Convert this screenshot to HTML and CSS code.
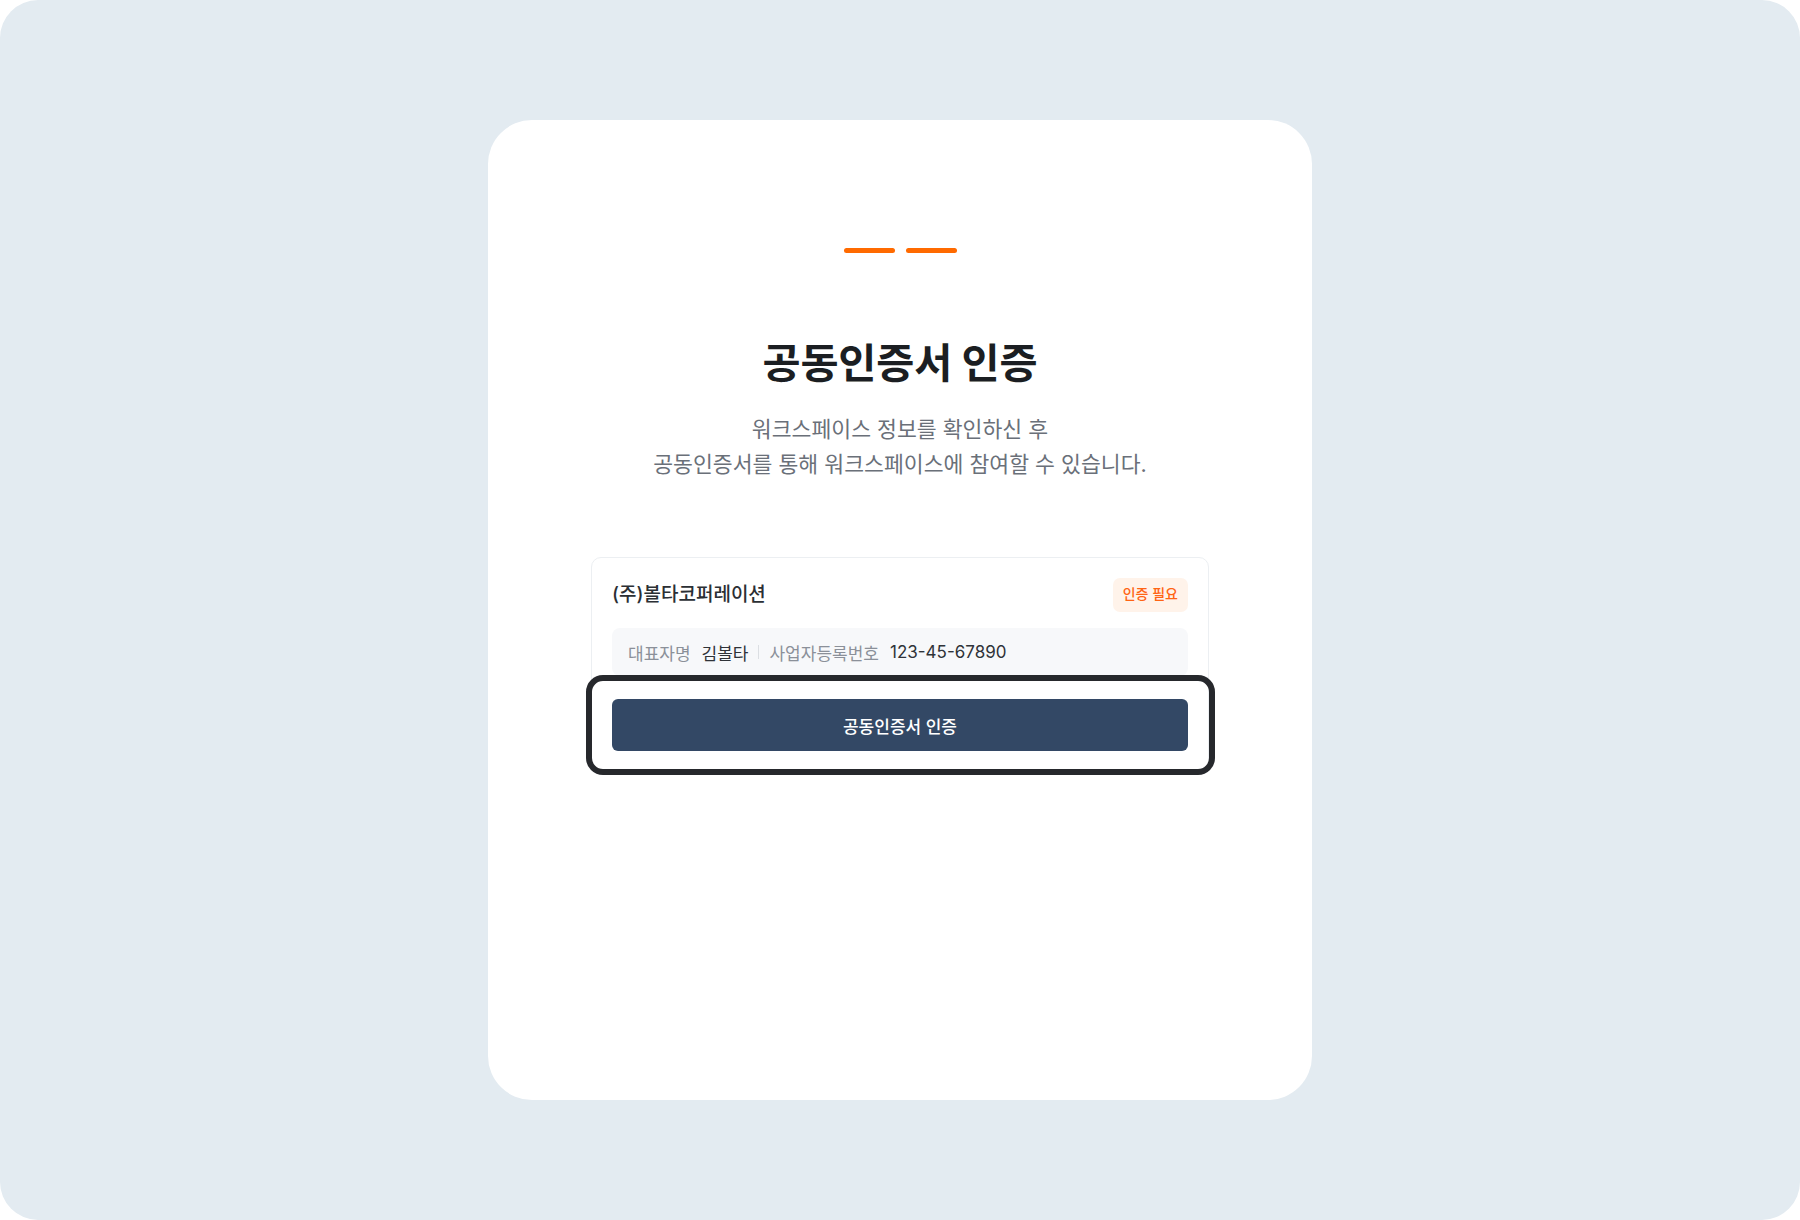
FILE: index.html
```html
<!DOCTYPE html>
<html lang="ko">
<head>
<meta charset="utf-8">
<title>공동인증서 인증</title>
<link rel="stylesheet" href="styles.css">
</head>
<body>
<div class="frame">
  <main class="card">
    <div class="steps">
      <span class="step"></span>
      <span class="step"></span>
    </div>
    <h1 class="title">공동인증서 인증</h1>
    <p class="desc">워크스페이스 정보를 확인하신 후<br>공동인증서를 통해 워크스페이스에 참여할 수 있습니다.</p>
    <section class="company">
      <div class="company-head">
        <span class="company-name">(주)볼타코퍼레이션</span>
        <span class="badge">인증 필요</span>
      </div>
      <div class="company-info">
        <span class="label">대표자명</span>
        <span class="value">김볼타</span>
        <span class="sep"></span>
        <span class="label">사업자등록번호</span>
        <span class="value">123-45-67890</span>
      </div>
      <div class="action">
        <button class="btn" type="button">공동인증서 인증</button>
        <span class="highlight"></span>
      </div>
    </section>
  </main>
</div>
</body>
</html>
```
FILE: styles.css
```css
* { box-sizing: border-box; }
html, body { margin: 0; padding: 0; background: #ffffff; }
body {
  font-family: Inter, "Noto Sans CJK KR", "Noto Sans", sans-serif;
  width: 1800px;
  height: 1220px;
  overflow: hidden;
}
.frame {
  width: 1800px;
  height: 1220px;
  background: #e3ebf1;
  border-radius: 38px;
  padding-top: 120px;
  display: flex;
  justify-content: center;
  align-items: flex-start;
}
.card {
  width: 824px;
  height: 980px;
  background: #ffffff;
  border-radius: 44px;
  padding-top: 128px;
  display: flex;
  flex-direction: column;
  align-items: center;
}
.steps {
  display: flex;
  gap: 11px;
}
.step {
  width: 51px;
  height: 5px;
  border-radius: 3px;
  background: #ff6a00;
}
.title {
  margin: 82px 0 0;
  font-size: 41.4px;
  line-height: 57px;
  font-weight: 700;
  color: #1b1e22;
  letter-spacing: -0.2px;
}
.desc {
  margin: 20px 0 0;
  font-size: 21.6px;
  line-height: 35px;
  color: #6a7079;
  text-align: center;
}
.company {
  margin-top: 75px;
  width: 618px;
  border: 1px solid #eceff2;
  border-radius: 10px;
  padding: 20px 20px 20px;
}
.company-head {
  display: flex;
  justify-content: space-between;
  align-items: center;
  height: 34px;
}
.company-name {
  font-size: 19px;
  font-weight: 500;
  color: #2b2f34;
  line-height: 1.2;
}
.badge {
  height: 34px;
  padding: 0 10px;
  display: flex;
  align-items: center;
  background: #fff3ea;
  color: #ff6414;
  font-size: 14px;
  font-weight: 500;
  line-height: 1;
  padding-bottom: 2px;
  border-radius: 7px;
}
.company-info {
  margin-top: 16px;
  height: 48px;
  background: #f7f8fa;
  border-radius: 8px;
  padding: 0 16px;
  display: flex;
  align-items: center;
  font-size: 17px;
}
.label { color: #8b9099; }
.value { color: #2f3338; margin-left: 11px; }
.sep {
  width: 1px;
  height: 14px;
  background: #dcdfe3;
  margin: 0 10px;
}
.action {
  position: relative;
  margin-top: 23px;
}
.btn {
  display: block;
  width: 100%;
  height: 52px;
  border: none;
  border-radius: 6px;
  background: #334865;
  color: #ffffff;
  font-family: inherit;
  font-size: 17px;
  font-weight: 500;
}
.highlight {
  position: absolute;
  left: -26px;
  right: -27px;
  top: -24px;
  bottom: -24px;
  border: 6px solid #26282c;
  border-radius: 17px;
  pointer-events: none;
}
```
